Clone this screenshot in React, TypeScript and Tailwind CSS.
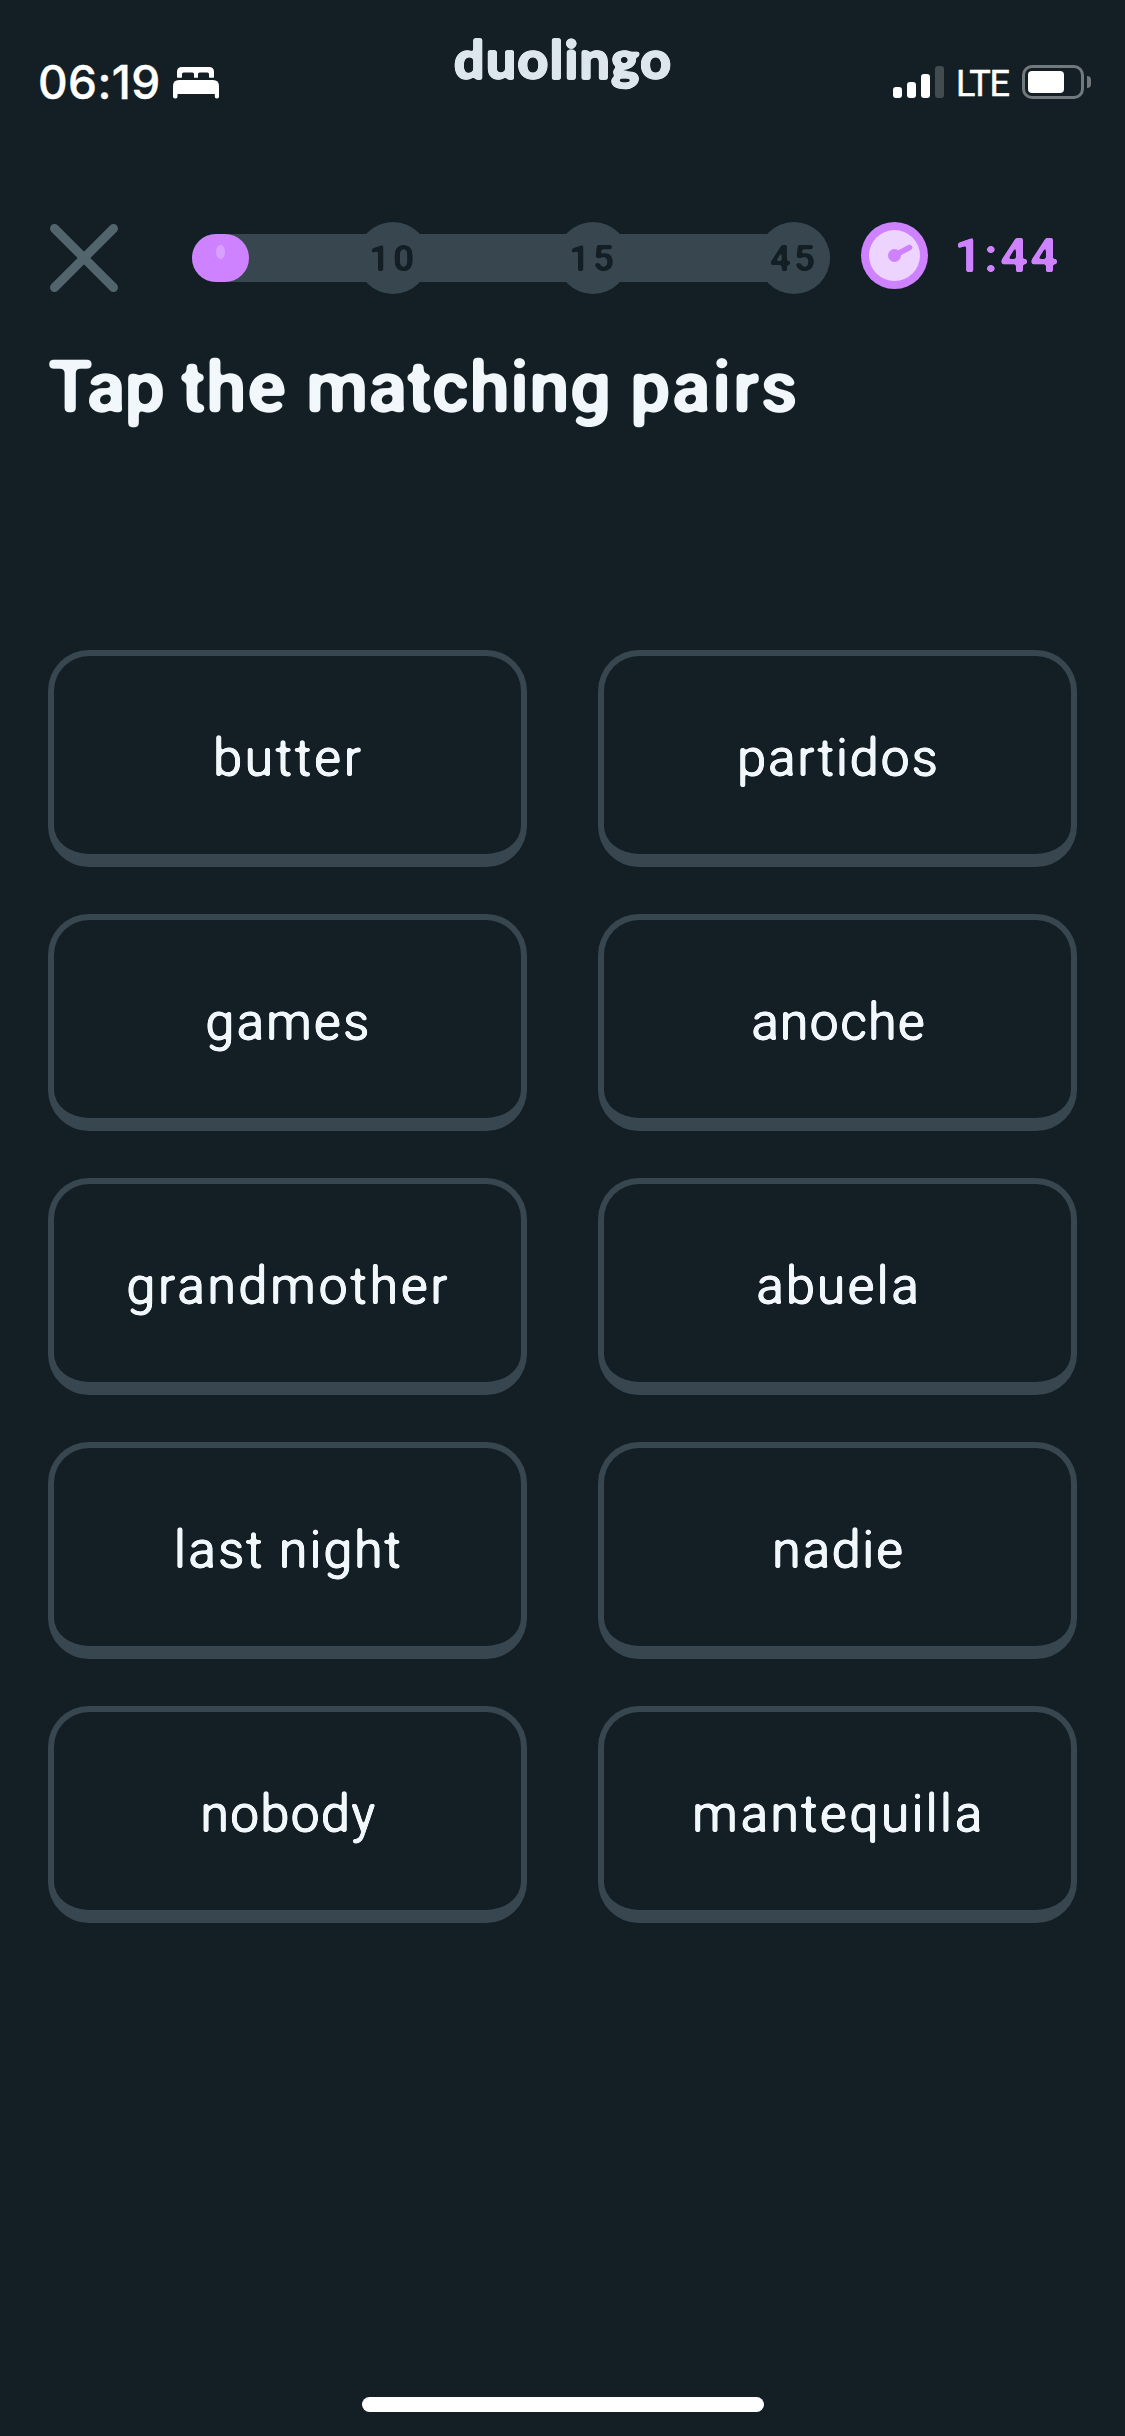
const words = [
  { text: 'butter', tracking: 'tracking-[1.8px]' },
  { text: 'partidos', tracking: 'tracking-[0.9px]' },
  { text: 'games', tracking: 'tracking-[1.1px]' },
  { text: 'anoche', tracking: 'tracking-[0.3px]' },
  { text: 'grandmother', tracking: 'tracking-[1.8px]' },
  { text: 'abuela', tracking: 'tracking-[1.2px]' },
  { text: 'last night', tracking: 'tracking-[1.1px]' },
  { text: 'nadie', tracking: 'tracking-[0.7px]' },
  { text: 'nobody', tracking: 'tracking-[0.3px]' },
  { text: 'mantequilla', tracking: 'tracking-[1.4px]' },
];

const milestones = [
  { label: '10', className: 'left-[165px]' },
  { label: '15', className: 'left-[365px]' },
  { label: '45', className: 'left-[566px]' },
];

// Softens the corners of the glyphs so the text reads as a rounded face
function RoundFilters() {
  return (
    <svg className="absolute h-0 w-0" aria-hidden="true">
      <defs>
        <filter id="round-sm" colorInterpolationFilters="sRGB">
          <feGaussianBlur stdDeviation="1.3" />
          <feComponentTransfer>
            <feFuncA type="linear" slope="4" intercept="-1.4" />
          </feComponentTransfer>
        </filter>
        <filter id="round-lg" colorInterpolationFilters="sRGB">
          <feGaussianBlur stdDeviation="2.2" />
          <feComponentTransfer>
            <feFuncA type="linear" slope="6" intercept="-2.5" />
          </feComponentTransfer>
        </filter>
      </defs>
    </svg>
  );
}

function StatusBar() {
  return (
    <div className="relative flex h-[132px] items-start justify-between">
      <div className="flex pl-[38px] pt-[54px]">
        <span className="w-[135px] font-['Inter'] text-[46px] font-medium leading-[56px] tracking-[0.4px] text-white [-webkit-text-stroke:0.4px_#fff]">
          06:19
        </span>
        <svg className="mt-[13px] h-[32px] w-[46px]" viewBox="0 0 46 32" fill="#fff">
          <path d="M4 10V5q0-5 5-5h27q5 0 5 5v5q0 .8-.8.8h-3.4q-.8 0-.8-.8V7q0-1.6-1.6-1.6h-7.8Q25 5.400 25 7v3.800h-4V7q0-1.600-1.600-1.600h-8.800Q9 5.400 9 7v3q0 .8-.8.8H4.800Q4 10.800 4 10Z" />
          <path d="M0 19q0-6 6-6h34q6 0 6 6v10.500q0 1.900-1.900 1.900h-.4q-1.900 0-1.900-1.900V27H4.500v2.500q0 1.900-1.900 1.900h-.7Q0 31.400 0 29.500Z" />
        </svg>
      </div>

      <span className="absolute left-1/2 top-[24px] -translate-x-1/2 pl-px font-['Lato'] text-[54px] font-black leading-[70px] tracking-[1px] text-[#dce6ec] [-webkit-text-stroke:1.5px_#dce6ec] [filter:url(#round-sm)]">
        duolingo
      </span>

      <div className="flex pr-[34px] pt-[65px]">
        <div className="mt-px flex h-8 items-end gap-[5px]">
          <div className="h-[11px] w-[9px] rounded-[3px] bg-white" />
          <div className="h-4 w-[9px] rounded-[3px] bg-white" />
          <div className="h-6 w-[9px] rounded-[3px] bg-white" />
          <div className="h-8 w-[9px] rounded-[3px] bg-[#424c50]" />
        </div>
        <span className="ml-[11px] w-[67px] pl-px pt-px font-['Roboto'] text-[36px] leading-[36px] tracking-[-1.3px] text-white [-webkit-text-stroke:0.5px_#fff]">
          LTE
        </span>
        <div className="h-[34px] w-[62px] rounded-[10px] border-[3px] border-[#71797c] p-[3px]">
          <div className="h-[22px] w-9 rounded-[4px] bg-white" />
        </div>
        <div className="ml-[3px] mt-[11px] h-[12px] w-[4px] rounded-r-full bg-[#71797c]" />
      </div>
    </div>
  );
}

function Progress() {
  return (
    <div className="relative h-[48px] w-[638px] rounded-full bg-[#37464f]">
      {milestones.map((m) => (
        <div
          key={m.label}
          className={`absolute -top-3 flex h-[72px] w-[72px] items-center justify-center rounded-full bg-[#37464f] ${m.className}`}
        >
          <span className="font-['Roboto'] text-[37px] font-bold leading-none tracking-[3px] text-[#131f24] [filter:url(#round-sm)]">
            {m.label}
          </span>
        </div>
      ))}
      <div className="h-[48px] w-[57px] rounded-[24px] bg-[#ce82ff] pl-6 pt-[11px]">
        <div className="h-[14px] w-[9px] rounded-[50%] bg-[#d8a0ff]" />
      </div>
    </div>
  );
}

function Timer() {
  return (
    <div className="flex items-start">
      <svg className="h-[67px] w-[67px]" viewBox="0 0 67 67">
        <circle cx="33.5" cy="33.5" r="33.5" fill="#ce82ff" />
        <circle cx="33.5" cy="33.5" r="25.5" fill="#ecd4ff" />
        <circle cx="33.5" cy="33.5" r="6.5" fill="#ce82ff" />
        <path d="M33.500 33.500 48.500 25.500" stroke="#ce82ff" strokeWidth="5.500" strokeLinecap="round" />
      </svg>
      <span className="ml-[26px] mt-[9px] font-['Roboto'] text-[49px] font-bold leading-[50px] tracking-[2px] text-[#ce82ff] [filter:url(#round-sm)]">
        1:44
      </span>
    </div>
  );
}

function Card({ text, tracking }: { text: string; tracking: string }) {
  return (
    <button className="flex h-[217px] items-center justify-center rounded-[41px] border-[6px] border-b-[13px] border-[#37464f] pl-px pt-[7px]">
      <span className={`font-['Roboto'] text-[53px] text-[#f1f7fb] [filter:url(#round-sm)] ${tracking}`}>
        {text}
      </span>
    </button>
  );
}

export default function App() {
  return (
    <div className="flex h-[2436px] w-[1125px] flex-col overflow-hidden bg-[#131f24] font-['Roboto',sans-serif]">
      <RoundFilters />
      <StatusBar />

      <div className="flex h-[212px] items-start pl-[50px] pt-[90px]">
        <svg className="mt-[2px] h-[68px] w-[68px]" viewBox="0 0 68 68">
          <path d="M4.500 4.500 63.500 63.500M63.500 4.500 4.500 63.500" stroke="#52656d" strokeWidth="9" strokeLinecap="round" />
        </svg>
        <div className="ml-[74px] mr-[31px] pt-3">
          <Progress />
        </div>
        <Timer />
      </div>

      <h1 className="flex h-[306px] pl-[48px] font-['Roboto'] text-[72px] font-bold leading-[88px] text-[#f1f7fb] [-webkit-text-stroke:0.5px_#f1f7fb] [filter:url(#round-lg)]">
        <span className="w-[133px] tracking-[-0.7px]">Tap </span>
        <span className="w-[125px] tracking-[0.8px]">the </span>
        <span className="w-[324px] tracking-[0.2px]">matching </span>
        <span className="tracking-[1.6px]">pairs</span>
      </h1>

      <div className="grid grid-cols-[479px_479px] gap-x-[71px] gap-y-[47px] px-12">
        {words.map((word) => (
          <Card key={word.text} text={word.text} tracking={word.tracking} />
        ))}
      </div>

      <div className="mx-auto mb-6 mt-auto h-[15px] w-[402px] rounded-full bg-white" />
    </div>
  );
}
